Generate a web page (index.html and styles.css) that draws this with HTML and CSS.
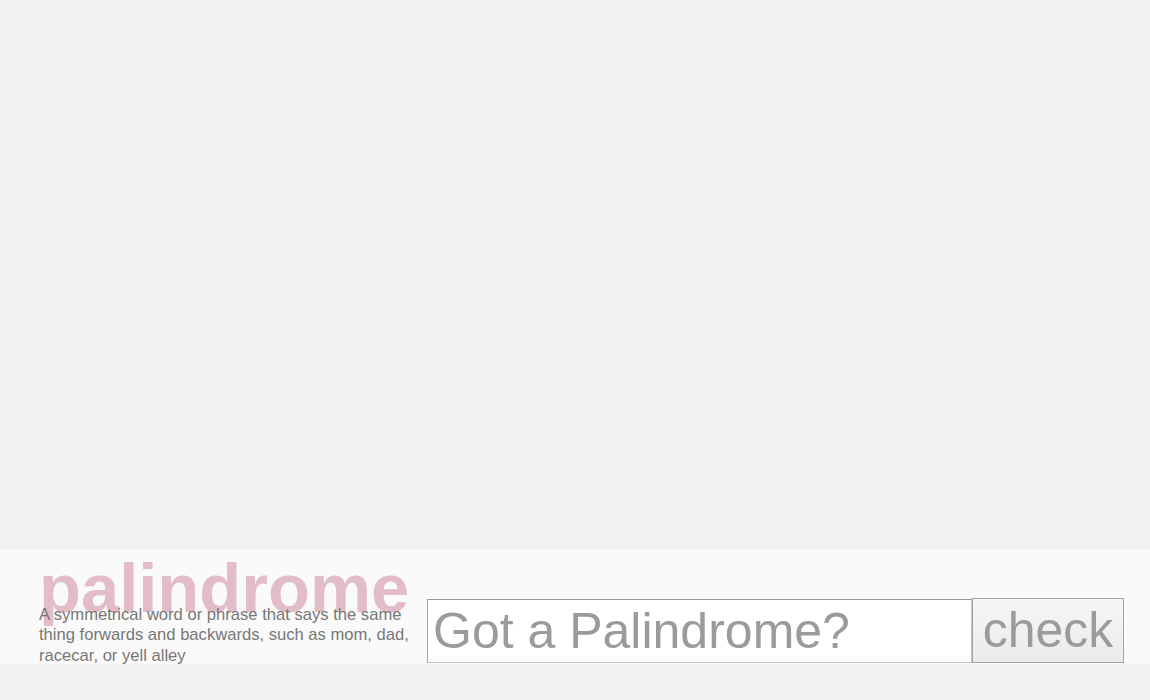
FILE: index.html
```html
<!DOCTYPE html>
<html lang="en">
<head>
<meta charset="utf-8">
<title>palindrome</title>
<link rel="stylesheet" href="styles.css">
</head>
<body>
<main class="stage"></main>
<footer class="bar">
  <div class="intro">
    <h1 class="title">palindrome</h1>
    <p class="desc">A symmetrical word or phrase that says the same thing forwards and backwards, such as mom, dad, racecar, or yell alley</p>
  </div>
  <form class="checker" onsubmit="return false">
    <input class="entry" type="text" placeholder="Got a Palindrome?">
    <button class="go" type="submit">check</button>
  </form>
</footer>
<div class="tail"></div>
</body>
</html>
```
FILE: styles.css
```css
* { box-sizing: border-box; }
html, body { margin: 0; padding: 0; }
body {
  background: #f2f2f2;
  font-family: "Liberation Sans", Arial, sans-serif;
  width: 1150px;
  height: 700px;
  overflow: hidden;
  display: flex;
  flex-direction: column;
}
.stage { height: 549px; flex: none; }
.bar {
  flex: none;
  height: 115px;
  background: #fafafa;
  display: flex;
  align-items: flex-start;
  padding-left: 39px;
  overflow: visible;
}
.intro { width: 375px; flex: none; }
.title {
  margin: 14.5px 0 0 0;
  font-size: 68.7px;
  line-height: 50px;
  font-weight: bold;
  color: #e2bdc8;
  letter-spacing: 0;
}
.desc {
  position: relative;
  margin: -9px 0 0 0;
  font-size: 16.6px;
  line-height: 20.5px;
  color: #777;
}
.checker {
  display: flex;
  margin: 49px 0 0 13px;
}
.entry {
  width: 545px;
  height: 64px;
  margin-top: 1px;
  border: 1px solid #c4c4c4;
  border-top-color: #9a9a9a;
  border-left-color: #a8a8a8;
  background: #fff;
  padding: 0 5px;
  font-family: "Liberation Sans", Arial, sans-serif;
  font-size: 50px;
  color: #555;
  outline: none;
}
.entry::placeholder { color: #9b9b9b; opacity: 1; }
.go {
  width: 152px;
  height: 65px;
  border: 1px solid #a3a3a3;
  background: linear-gradient(#f6f6f6, #ebebeb);
  color: #9b9b9b;
  font-family: "Liberation Sans", Arial, sans-serif;
  font-size: 50px;
  padding: 0 0 2px 0;
  margin: 0;
  border-radius: 0;
}
.tail { flex: 1; }
```
